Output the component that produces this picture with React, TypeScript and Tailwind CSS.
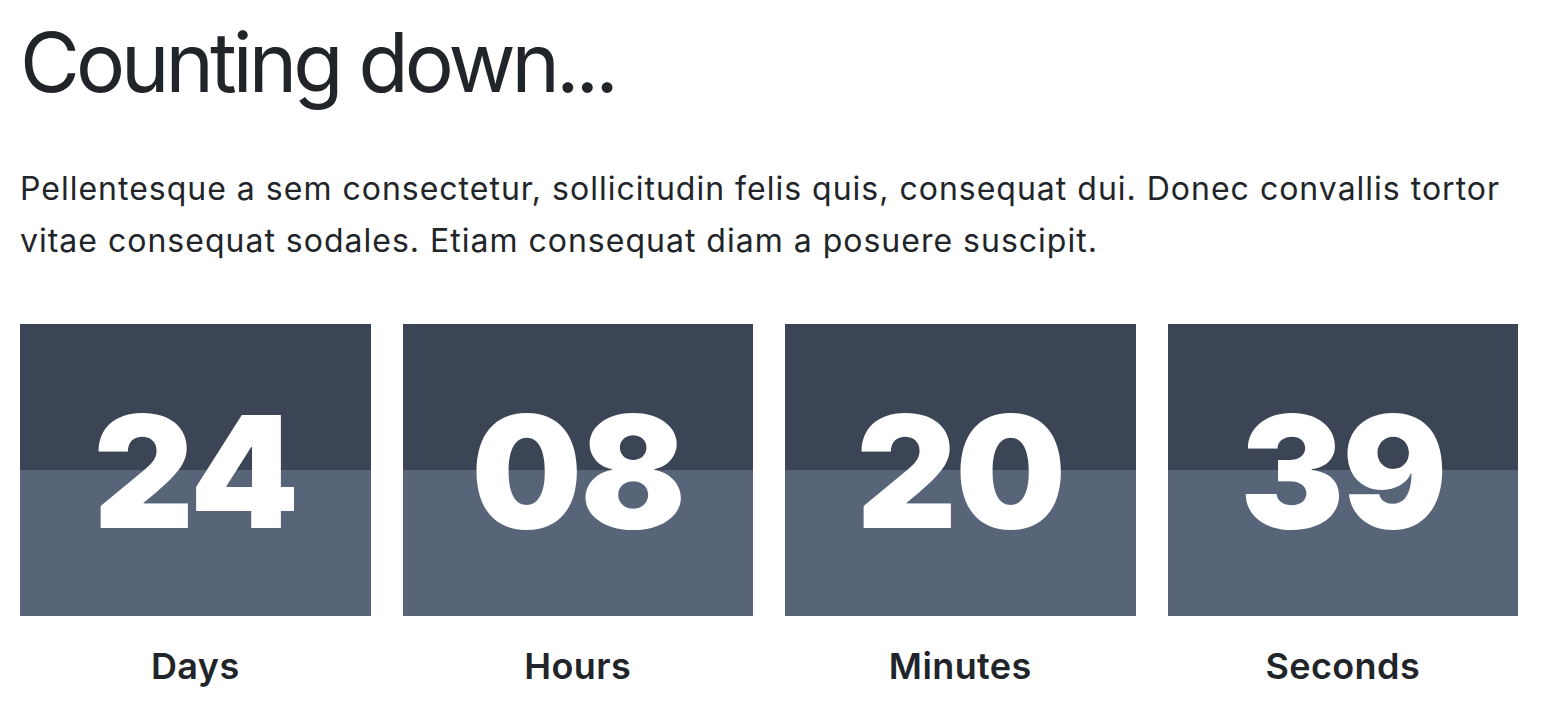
import React from "react";

const items = [
  { value: "24", label: "Days" },
  { value: "08", label: "Hours" },
  { value: "20", label: "Minutes" },
  { value: "39", label: "Seconds" },
];

export default function App() {
  return (
    <div
      className="w-[1564px] h-[728px] bg-white text-[#212529] px-[20px] pt-[22px]"
      style={{ fontFamily: "Inter, 'Liberation Sans', sans-serif" }}
    >
      <div className="w-[1498px]">
        <h1 className="text-[82px] leading-none font-normal tracking-[-4px] m-0">Counting down...</h1>
        <p className="mt-[59px] text-[32px] leading-[52px] tracking-[1px]">
          Pellentesque a sem consectetur, sollicitudin felis quis, consequat dui. Donec convallis tortor vitae consequat
          sodales. Etiam consequat diam a posuere suscipit.
        </p>
        <div className="mt-[57px] grid grid-cols-4 gap-x-[32px]">
          {items.map((it) => (
            <div key={it.label} className="flex flex-col items-center">
              <div className="relative w-full h-[292px] flex flex-col">
                <div className="h-[146px] bg-[#3b4555]" />
                <div className="h-[146px] bg-[#586579]" />
                <div className="absolute inset-0 flex items-center justify-center pt-[4px] text-white text-[156px] font-black leading-none tracking-[-2px]">
                  {it.value}
                </div>
              </div>
              <div className="mt-[32px] text-[36px] font-semibold leading-none tracking-[0.4px]">{it.label}</div>
            </div>
          ))}
        </div>
      </div>
    </div>
  );
}
